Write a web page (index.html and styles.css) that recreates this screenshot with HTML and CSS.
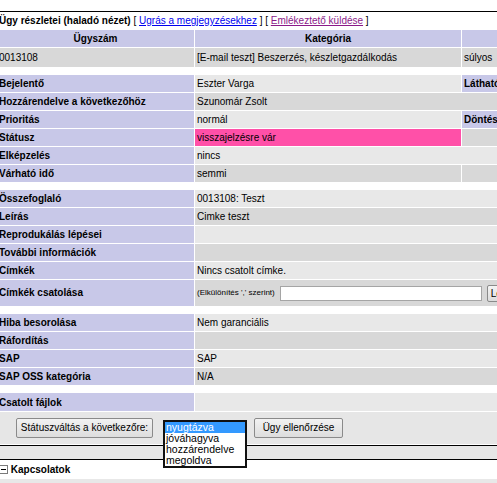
FILE: index.html
```html
<!DOCTYPE html>
<html lang="hu">
<head>
<meta charset="utf-8">
<title>Ügy részletei</title>
<link rel="stylesheet" href="styles.css">
</head>
<body>
<table class="bug">
  <colgroup><col class="c1"><col class="c2"><col class="c3"><col class="c4"><col class="c5"><col class="c6"></colgroup>
  <tr class="title-row">
    <td colspan="6"><span class="form-title">Ügy részletei (haladó nézet)</span> [ <a href="#" class="lnk">Ugrás a megjegyzésekhez</a> ] [ <a href="#" class="lnk visited">Emlékeztető küldése</a> ]</td>
  </tr>
  <tr class="hdr">
    <td>Ügyszám</td><td>Kategória</td><td></td><td></td><td></td><td></td>
  </tr>
  <tr class="row-2 tall">
    <td>0013108</td><td>[E-mail teszt] Beszerzés, készletgazdálkodás</td><td>súlyos</td><td></td><td></td><td></td>
  </tr>
  <tr class="spacer"><td colspan="6"></td></tr>
  <tr class="row-1">
    <td class="cat">Bejelentő</td><td>Eszter Varga</td><td class="cat">Láthatóság</td><td></td><td class="cat"></td><td></td>
  </tr>
  <tr class="row-2">
    <td class="cat">Hozzárendelve a következőhöz</td><td colspan="5">Szunomár Zsolt</td>
  </tr>
  <tr class="row-1">
    <td class="cat">Prioritás</td><td>normál</td><td class="cat">Döntés</td><td></td><td class="cat"></td><td></td>
  </tr>
  <tr class="row-2">
    <td class="cat">Státusz</td><td class="status">visszajelzésre vár</td><td colspan="4"></td>
  </tr>
  <tr class="row-1">
    <td class="cat">Elképzelés</td><td colspan="5">nincs</td>
  </tr>
  <tr class="row-2">
    <td class="cat">Várható idő</td><td>semmi</td><td colspan="4"></td>
  </tr>
  <tr class="spacer"><td colspan="6"></td></tr>
  <tr class="row-1"><td class="cat">Összefoglaló</td><td colspan="5">0013108: Teszt</td></tr>
  <tr class="row-2"><td class="cat">Leírás</td><td colspan="5">Cimke teszt</td></tr>
  <tr class="row-1"><td class="cat">Reprodukálás lépései</td><td colspan="5"></td></tr>
  <tr class="row-2"><td class="cat">További információk</td><td colspan="5"></td></tr>
  <tr class="row-1"><td class="cat">Címkék</td><td colspan="5">Nincs csatolt címke.</td></tr>
  <tr class="row-2 tagrow">
    <td class="cat">Címkék csatolása</td>
    <td colspan="5">
      <div class="tagform">
        <span class="small">(Elkülönítés ',' szerint)</span>
        <input type="text" class="tag-input">
        <button type="button" class="tag-btn">Le</button>
      </div>
    </td>
  </tr>
  <tr class="spacer"><td colspan="6"></td></tr>
  <tr class="row-1"><td class="cat">Hiba besorolása</td><td colspan="5">Nem garanciális</td></tr>
  <tr class="row-2"><td class="cat">Ráfordítás</td><td colspan="5"></td></tr>
  <tr class="row-1"><td class="cat">SAP</td><td colspan="5">SAP</td></tr>
  <tr class="row-2"><td class="cat">SAP OSS kategória</td><td colspan="5">N/A</td></tr>
  <tr class="spacer"><td colspan="6"></td></tr>
  <tr class="row-1 files"><td class="cat">Csatolt fájlok</td><td colspan="5"></td></tr>
  <tr class="buttons">
    <td colspan="6">
      <div class="btnbar">
        <button type="button" class="btn btn-status">Státuszváltás a következőre:</button>
        <div class="select-wrap">
          <ul class="dropdown">
            <li class="sel">nyugtázva</li>
            <li>jóváhagyva</li>
            <li>hozzárendelve</li>
            <li>megoldva</li>
          </ul>
        </div>
        <button type="button" class="btn btn-check">Ügy ellenőrzése</button>
      </div>
    </td>
  </tr>
</table>
<div class="gap"></div>
<table class="rel">
  <tr class="rel-title">
    <td><svg class="minus" width="9" height="9" viewBox="0 0 9 9"><rect x="0.5" y="0.5" width="8" height="8" fill="#fff" stroke="#7a7a7a"/><line x1="2" y1="4.5" x2="7" y2="4.5" stroke="#000"/></svg> Kapcsolatok</td>
  </tr>
  <tr class="rel-row"><td></td></tr>
</table>
</body>
</html>
```

FILE: styles.css
```css
html {
  overflow: hidden;
}

body {
  margin: 0;
  padding-top: 11px;
  background: #fff;
  color: #000;
  font-family: "Liberation Sans", Arial, sans-serif;
  font-size: 10px;
}

table.bug,
table.rel {
  border: 1px solid #000;
  border-spacing: 1px;
  margin-left: -5px;
  table-layout: fixed;
  width: 1072px;
  background: #fff;
}

col.c1 { width: 197px; }
col.c2 { width: 266px; }
col.c3 { width: 150px; }
col.c4 { width: 150px; }
col.c5 { width: 150px; }
col.c6 { width: 150px; }

.bug td {
  padding: 0 2px;
  height: 17px;
  line-height: 17px;
  white-space: nowrap;
  overflow: hidden;
  vertical-align: middle;
}

.title-row td {
  height: 16px;
  line-height: 16px;
  background: #fff;
}

.form-title {
  font-weight: bold;
}

.lnk {
  color: #0000ee;
  text-decoration: underline;
}

.lnk.visited {
  color: #8b1a89;
}

.hdr td {
  background: #c8c8e8;
  font-weight: bold;
  text-align: center;
}

.row-1 td { background: #e8e8e8; }
.row-2 td { background: #d8d8d8; }

.bug td.cat {
  background: #c8c8e8;
  font-weight: bold;
}

.bug td.status {
  background: #ff50a8;
}

.tall td {
  height: 19px;
  line-height: 19px;
}

.bug .spacer td {
  height: 6px;
  line-height: 0;
  font-size: 0;
  padding: 0;
  background: #fff;
}

.tagrow td {
  height: 26px;
  line-height: 26px;
}

.tagform {
  display: flex;
  align-items: center;
  gap: 5px;
  height: 26px;
}

.small {
  font-size: 8px;
  line-height: 10px;
}

.tag-input {
  box-sizing: border-box;
  width: 202px;
  height: 15px;
  margin: 0;
  padding: 0 2px;
  border: 1px solid #a5a5a5;
  background: #fff;
  font: inherit;
}

.tag-btn {
  box-sizing: border-box;
  width: 60px;
  height: 17px;
  margin: 0;
  padding: 0 3px;
  border: 1px solid #8a8a8a;
  border-radius: 2px;
  background: linear-gradient(#f4f4f4, #dcdcdc);
  font: inherit;
  font-size: 10px;
  line-height: 15px;
  text-align: left;
}

.files td {
  height: 18px;
}

.buttons td {
  height: 32px;
  background: #e6e6e6;
  padding: 0;
  vertical-align: top;
  overflow: visible;
}

.btnbar {
  display: flex;
  align-items: flex-start;
  padding: 6px 0 0 19px;
}

.btn {
  box-sizing: border-box;
  height: 20px;
  margin: 0;
  padding: 0;
  border: 1px solid #8a8a8a;
  border-radius: 2px;
  background: linear-gradient(#f2f2f2, #dddddd);
  color: #000;
  font-family: "Liberation Sans", Arial, sans-serif;
  font-size: 10px;
  line-height: 18px;
  text-align: center;
}

.btn-status {
  width: 137px;
}

.btn-check {
  width: 89px;
  margin-left: 7px;
}

.select-wrap {
  position: relative;
  width: 84px;
  height: 20px;
  margin-left: 10px;
}

.dropdown {
  position: absolute;
  top: 2px;
  left: 0;
  width: 84px;
  box-sizing: border-box;
  margin: 0;
  padding: 0;
  list-style: none;
  border: 2px solid #111;
  background: #fff;
  z-index: 5;
  font-size: 10.5px;
  line-height: 11px;
}

.dropdown li {
  height: 11px;
  padding-left: 1px;
  white-space: nowrap;
}

.dropdown li.sel {
  background: #3399ff;
  color: #fff;
}

.gap {
  height: 13px;
  background: #e6e6e6;
}

.rel td {
  padding: 0 2px;
  white-space: nowrap;
}

.rel-title td {
  height: 17px;
  line-height: 17px;
  font-weight: bold;
  background: #fff;
}

.rel-row td {
  height: 17px;
  background: #e8e8e8;
}

.minus {
  vertical-align: -1px;
}
```
